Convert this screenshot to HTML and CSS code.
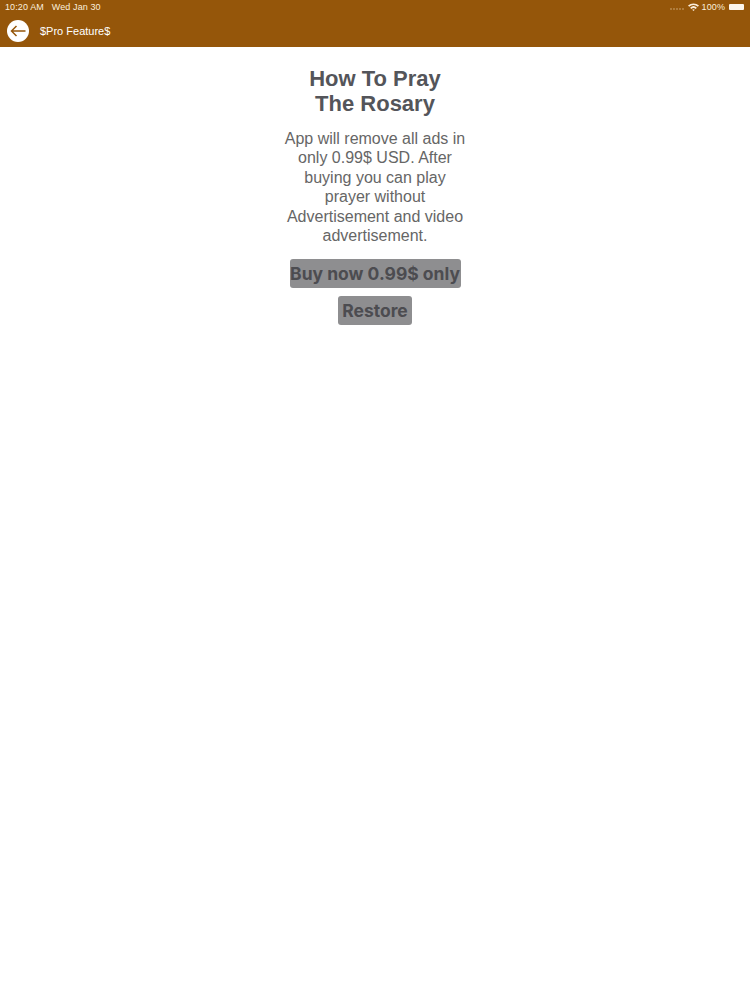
FILE: index.html
```html
<!DOCTYPE html>
<html lang="en">
<head>
    <meta charset="UTF-8">
    <meta name="viewport" content="width=device-width, initial-scale=1.0">
    <title>$Pro Feature$</title>
    <link rel="stylesheet" href="styles.css">
</head>
<body>
    <header class="topbar">
        <div class="status">
            <div class="status-left">
                <span>10:20 AM</span>
                <span>Wed Jan 30</span>
            </div>
            <div class="status-right">
                <span class="signal">
                    <i></i><i></i><i></i><i></i><i></i>
                </span>
                <svg class="wifi" width="11" height="8" viewBox="0 0 11 8">
                    <path d="M0 2.6A8 8 0 0 1 11 2.6L9.8 3.8A6.3 6.3 0 0 0 1.2 3.8Z" fill="#fbeedd"/>
                    <path d="M2.1 4.7A5 5 0 0 1 8.9 4.7L7.7 5.9A3.3 3.3 0 0 0 3.3 5.9Z" fill="#fbeedd"/>
                    <path d="M4.2 6.8A2 2 0 0 1 6.8 6.8L5.5 8Z" fill="#fbeedd"/>
                </svg>
                <span class="percent">100%</span>
                <span class="battery"></span>
            </div>
        </div>
        <div class="navbar">
            <button class="back" type="button" aria-label="Back">
                <svg width="16" height="12" viewBox="0 0 16 12">
                    <path d="M15.5 6H1.5M6.5 1L1.5 6L6.5 11" fill="none" stroke="#95560a" stroke-width="1.5"/>
                </svg>
            </button>
            <span class="nav-title">$Pro Feature$</span>
        </div>
    </header>

    <main class="content">
        <h1>How To Pray<br>The Rosary</h1>
        <p>App will remove all ads in<br>only 0.99$ USD. After<br>buying you can play<br>prayer without<br>Advertisement and video<br>advertisement.</p>
        <button class="action buy" type="button">Buy now 0.99$ only</button>
        <button class="action restore" type="button">Restore</button>
    </main>
</body>
</html>
```

FILE: styles.css
```css
body {
    margin: 0;
    background: #fff;
    font-family: "Liberation Sans", Arial, sans-serif;
}
.topbar {
    height: 47px;
    background: #95560a;
    color: #fbeedd;
}
.status {
    display: flex;
    justify-content: space-between;
    align-items: center;
    height: 14px;
    padding: 0 6px 0 5px;
    font-size: 9px;
    letter-spacing: 0.1px;
}
.status-left {
    display: flex;
    gap: 8px;
}
.status-right {
    display: flex;
    align-items: center;
    gap: 3px;
}
.percent {
    margin-right: 1px;
}
.signal {
    display: flex;
    gap: 1px;
    margin-right: 1px;
    padding-top: 3px;
}
.signal i {
    width: 2px;
    height: 2px;
    background: #b98a4e;
    border-radius: 50%;
}
.battery {
    width: 15px;
    height: 6px;
    background: #fdf6ec;
    border-radius: 1px;
}
.navbar {
    display: flex;
    align-items: center;
    gap: 11px;
    height: 33px;
    padding-left: 7px;
}
.back {
    display: flex;
    align-items: center;
    justify-content: center;
    width: 22px;
    height: 22px;
    padding: 0;
    border: 0;
    border-radius: 50%;
    background: #fff;
}
.nav-title {
    font-size: 11px;
    color: #fff;
}
.content {
    display: flex;
    flex-direction: column;
    align-items: center;
    padding-top: 19px;
    color: #54555a;
    text-align: center;
}
h1 {
    margin: 0 0 13px;
    font-size: 22px;
    line-height: 25px;
    font-weight: bold;
}
p {
    margin: 0 0 14px;
    font-size: 16px;
    line-height: 19.4px;
    color: #666;
}
.action {
    height: 29px;
    padding: 0;
    border: 0;
    border-radius: 3px;
    background: #8e8e90;
    color: #4c4c50;
    font-family: Inter, "Liberation Sans", sans-serif;
    font-size: 17.5px;
    font-weight: 700;
    white-space: nowrap;
}
.buy {
    width: 171px;
    margin-bottom: 8px;
}
.restore {
    width: 74px;
}
```
